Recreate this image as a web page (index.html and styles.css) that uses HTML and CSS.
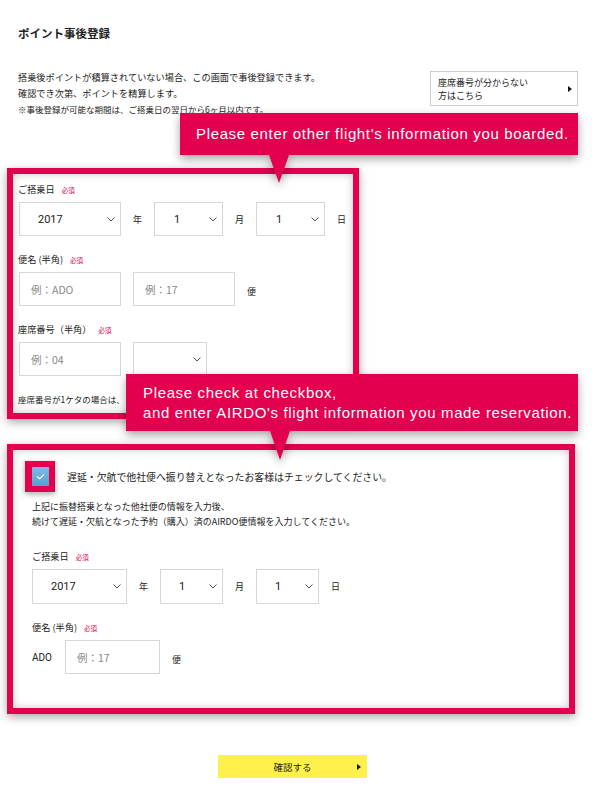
FILE: index.html
```html
<!DOCTYPE html>
<html lang="ja">

<head>
    <meta charset="UTF-8" />
    <meta name="viewport" content="width=device-width, initial-scale=1.0" />
    <title>ポイント事後登録</title>
    <link rel="stylesheet" href="styles.css">
</head>

<body>
    <div class="page">
        <h1 class="title">ポイント事後登録</h1>

        <div class="intro">
            <div class="intro-text">
                <p>搭乗後ポイントが積算されていない場合、この画面で事後登録できます。</p>
                <p>確認でき次第、ポイントを精算します。</p>
                <p class="note">※事後登録が可能な期間は、ご搭乗日の翌日から6ヶ月以内です。</p>
            </div>
            <a class="seat-link" href="#">
                <span>座席番号が分からない<br />方はこちら</span>
                <i class="arrow"></i>
            </a>
        </div>

        <!-- 他社便 -->
        <section class="frame frame-other">
            <div class="label">ご搭乗日<em>必須</em></div>
            <div class="row">
                <div class="select sel-year">2017<svg viewBox="0 0 8 5"><path d="M0.5 0.5 4 4 7.5 0.5" /></svg></div>
                <span class="unit">年</span>
                <div class="select sel-small">1<svg viewBox="0 0 8 5"><path d="M0.5 0.5 4 4 7.5 0.5" /></svg></div>
                <span class="unit">月</span>
                <div class="select sel-small">1<svg viewBox="0 0 8 5"><path d="M0.5 0.5 4 4 7.5 0.5" /></svg></div>
                <span class="unit">日</span>
            </div>

            <div class="label">便名 (半角)<em>必須</em></div>
            <div class="row">
                <input class="field" type="text" placeholder="例：ADO" />
                <input class="field field-gap" type="text" placeholder="例：17" />
                <span class="unit unit-low">便</span>
            </div>

            <div class="label">座席番号（半角）<em>必須</em></div>
            <div class="row">
                <input class="field" type="text" placeholder="例：04" />
                <div class="select sel-seat"><svg viewBox="0 0 8 5"><path d="M0.5 0.5 4 4 7.5 0.5" /></svg></div>
            </div>

            <p class="hint">座席番号が1ケタの場合は、</p>
        </section>

        <!-- AIRDO便 -->
        <section class="frame frame-airdo">
            <label class="check-row">
                <span class="check-mark">
                    <span class="check-box"><svg viewBox="0 0 10 8"><path d="M1 4 4 6.5 9 1.5" /></svg></span>
                </span>
                遅延・欠航で他社便へ振り替えとなったお客様はチェックしてください。
            </label>
            <div class="desc">
                <p>上記に振替搭乗となった他社便の情報を入力後、</p>
                <p>続けて遅延・欠航となった予約（購入）済のAIRDO便情報を入力してください。</p>
            </div>

            <div class="label">ご搭乗日<em>必須</em></div>
            <div class="row">
                <div class="select sel-year2">2017<svg viewBox="0 0 8 5"><path d="M0.5 0.5 4 4 7.5 0.5" /></svg></div>
                <span class="unit">年</span>
                <div class="select sel-small2">1<svg viewBox="0 0 8 5"><path d="M0.5 0.5 4 4 7.5 0.5" /></svg></div>
                <span class="unit">月</span>
                <div class="select sel-small2">1<svg viewBox="0 0 8 5"><path d="M0.5 0.5 4 4 7.5 0.5" /></svg></div>
                <span class="unit">日</span>
            </div>

            <div class="label">便名 (半角)<em>必須</em></div>
            <div class="row">
                <span class="prefix">ADO</span>
                <input class="field field-short" type="text" placeholder="例：17" />
                <span class="unit unit-low">便</span>
            </div>
        </section>

        <div class="actions">
            <button class="confirm">確認する<i class="arrow"></i></button>
        </div>

        <!-- 注釈 -->
        <div class="callout callout-1">Please enter other flight's information you boarded.</div>
        <div class="callout callout-2">Please check at checkbox,<br />and enter AIRDO's flight information you made reservation.</div>
    </div>
</body>

</html>
```

FILE: styles.css
```css
html,
body {
    margin: 0;
    padding: 0;
    background-color: #fff;
}

body {
    font-family: "Noto Sans CJK JP", "Liberation Sans", sans-serif;
    color: #222;
}

.page {
    position: relative;
    width: 600px;
    height: 792px;
    padding-top: 25px;
    box-sizing: border-box;
}

p {
    margin: 0;
}

.title {
    margin: 0 0 0 18px;
    font-size: 11.5px;
    line-height: 16px;
    font-weight: bold;
}

/* intro */
.intro {
    display: flex;
    justify-content: space-between;
    align-items: flex-start;
    margin: 28px 22px 0 18px;
}

.intro-text p {
    font-size: 9.2px;
    line-height: 16px;
}

.intro-text p.note {
    font-size: 8.5px;
}

.seat-link {
    display: flex;
    align-items: center;
    justify-content: space-between;
    box-sizing: border-box;
    width: 148px;
    height: 35px;
    margin-top: 2px;
    padding: 0 5px 0 7px;
    border: 1px solid #ccc;
    color: #222;
    text-decoration: none;
    font-size: 9px;
    line-height: 13px;
}

.arrow {
    display: inline-block;
    width: 0;
    height: 0;
    border-top: 3px solid transparent;
    border-bottom: 3px solid transparent;
    border-left: 4px solid #111;
}

/* frames */
.frame {
    box-sizing: border-box;
    margin-left: 7px;
    border: 6px solid #e3004f;
    background-color: #fff;
    box-shadow: 0 3px 9px rgba(0, 0, 0, 0.35), inset 0 0 9px rgba(0, 0, 0, 0.22);
}

.frame-other {
    width: 352px;
    margin-top: 51px;
    padding: 8px 4px 7px 5px;
}

.frame-airdo {
    width: 568px;
    margin-top: 25px;
    padding: 11px 12px 34px 19px;
}

.label {
    font-size: 9.2px;
    line-height: 14px;
    margin-top: 16px;
}

.frame-other .label:first-child {
    margin-top: 0;
}

.label em {
    font-style: normal;
    color: #e3004f;
    font-size: 6.5px;
    margin-left: 7px;
}

.row {
    display: flex;
    align-items: center;
    margin-top: 5px;
}

.row > * {
    flex-shrink: 0;
}

.frame-other .row {
    padding-left: 1px;
}

.select {
    display: flex;
    align-items: center;
    justify-content: space-between;
    box-sizing: border-box;
    height: 34px;
    padding: 0 5px 0 18px;
    border: 1px solid #d6d6d6;
    font-family: "Roboto", "Liberation Sans", sans-serif;
    font-size: 11px;
    color: #222;
}

.select svg {
    width: 8px;
    height: 5px;
    fill: none;
    stroke: #555;
    stroke-width: 1;
}

.sel-year {
    width: 102px;
}

.sel-small {
    width: 69px;
    padding-left: 19px;
}

.sel-seat {
    width: 74px;
    margin-left: 12px;
    justify-content: flex-end;
}

.sel-year2 {
    width: 95px;
    height: 35px;
}

.sel-small2 {
    width: 63px;
    height: 35px;
}

.unit {
    margin: 0 12px;
    font-size: 9px;
}

.row .unit:last-child {
    margin-right: 0;
}

.unit-low {
    padding-top: 4px;
}

.field {
    box-sizing: border-box;
    width: 102px;
    height: 34px;
    margin: 0;
    padding: 0 11px;
    border: 1px solid #d6d6d6;
    border-radius: 0;
    font-family: "Noto Sans CJK JP", "Liberation Sans", sans-serif;
    font-size: 10.5px;
    color: #222;
    outline: none;
}

.field::placeholder {
    color: #888;
}

.field-gap {
    margin-left: 12px;
}

.field-short {
    width: 95px;
    margin-left: 13px;
}

.prefix {
    font-family: "Roboto", "Liberation Sans", sans-serif;
    font-size: 10px;
}

.hint {
    margin-top: 16px;
    font-size: 8.5px;
    line-height: 14px;
}

/* check */
.check-row {
    display: flex;
    align-items: center;
    margin-left: -7px;
    font-size: 9.9px;
    line-height: 14px;
}

.check-mark {
    display: flex;
    align-items: center;
    justify-content: center;
    box-sizing: border-box;
    width: 30px;
    height: 31px;
    margin-right: 12px;
    background-color: #e3004f;
    box-shadow: 0 2px 6px rgba(0, 0, 0, 0.35);
}

.check-box {
    display: flex;
    align-items: center;
    justify-content: center;
    width: 17px;
    height: 19px;
    background: linear-gradient(#7cbde6, #5a9fd0);
}

.check-box svg {
    width: 9px;
    height: 7px;
    fill: none;
    stroke: #fff;
    stroke-width: 1.4;
}

.desc {
    margin-top: 7px;
}

.desc p {
    font-size: 9px;
    line-height: 15px;
}

.frame-airdo .label {
    margin-top: 20px;
}

.frame-airdo .label ~ .label {
    margin-top: 16px;
}

/* button */
.actions {
    display: flex;
    margin-top: 41px;
    padding-left: 218px;
}

.confirm {
    display: flex;
    align-items: center;
    justify-content: center;
    position: relative;
    width: 149px;
    height: 23px;
    padding: 0;
    border: none;
    background-color: #fff14b;
    font-family: "Noto Sans CJK JP", sans-serif;
    font-size: 9.5px;
    color: #222;
    cursor: pointer;
}

.confirm .arrow {
    position: absolute;
    right: 6px;
    top: 9px;
}

/* callouts lie over the page */
.callout {
    position: absolute;
    box-sizing: border-box;
    background-color: #e3004f;
    color: #fff;
    font-family: "Liberation Sans", sans-serif;
    font-size: 15px;
    letter-spacing: 0.65px;
    white-space: nowrap;
    filter: drop-shadow(0 4px 5px rgba(0, 0, 0, 0.35));
}

.callout::after {
    content: "";
    position: absolute;
    top: 100%;
    border-top: 28px solid #e3004f;
    border-left: 10px solid transparent;
    border-right: 10px solid transparent;
}

.callout-1 {
    left: 180px;
    top: 113px;
    width: 398px;
    height: 42px;
    padding-left: 16px;
    line-height: 42px;
}

.callout-1::after {
    left: 89px;
}

.callout-2 {
    left: 126px;
    top: 374px;
    width: 452px;
    height: 57px;
    padding: 9px 0 0 17px;
    line-height: 20px;
}

.callout-2::after {
    left: 144px;
    border-top-width: 29px;
}
```
